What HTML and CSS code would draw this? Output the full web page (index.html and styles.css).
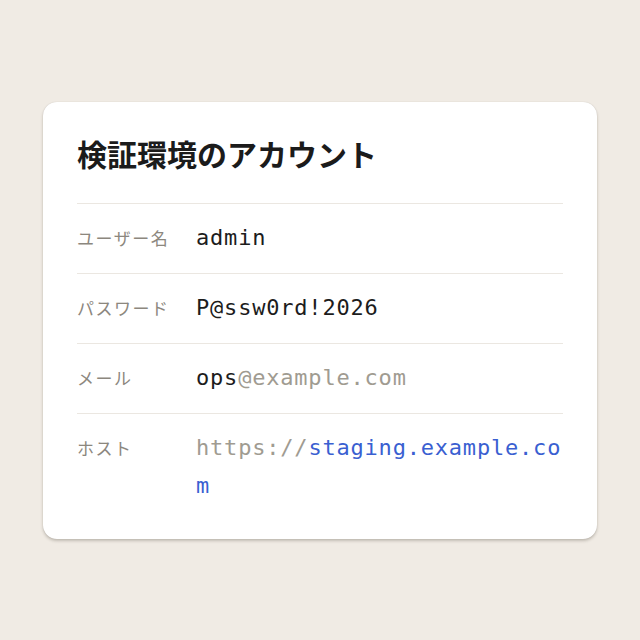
FILE: index.html
```html
<!DOCTYPE html>
<html lang="ja">
<head>
<meta charset="utf-8">
<link rel="stylesheet" href="styles.css">
</head>
<body>
<main class="page">
  <section class="card">
    <h1 class="title">検証環境のアカウント</h1>
    <dl class="list">
      <div class="row">
        <dt class="label">ユーザー名</dt>
        <dd class="value">admin</dd>
      </div>
      <div class="row">
        <dt class="label">パスワード</dt>
        <dd class="value">P@ssw0rd!2026</dd>
      </div>
      <div class="row">
        <dt class="label">メール</dt>
        <dd class="value">ops<span class="muted">@example.com</span></dd>
      </div>
      <div class="row">
        <dt class="label">ホスト</dt>
        <dd class="value"><span class="muted">https://</span><span class="link">staging.example.com</span></dd>
      </div>
    </dl>
  </section>
</main>
</body>
</html>
```
FILE: styles.css
```css
html, body {
  margin: 0;
  padding: 0;
}
body {
  background: #f0ebe4;
  font-family: "Noto Sans CJK JP", "Noto Sans", sans-serif;
  width: 640px;
  height: 640px;
}
.page {
  display: flex;
  justify-content: center;
  padding-top: 102px;
}
.card {
  width: 554px;
  box-sizing: border-box;
  background: #ffffff;
  border-radius: 14px;
  padding: 31px 34px 18px;
  box-shadow: 0 2px 3px rgba(60, 50, 40, 0.25), 0 0 1px rgba(60, 50, 40, 0.2);
}
.title {
  margin: 0 0 30px;
  font-size: 30px;
  line-height: 40px;
  font-weight: 700;
  color: #1b1b1b;
}
.list {
  margin: 0;
}
.row {
  display: grid;
  grid-template-columns: 119px 1fr;
  border-top: 1px solid #ebe7e1;
  padding: 15px 0 16px;
}
.label {
  font-size: 17px;
  line-height: 38px;
  color: #8c877e;
  letter-spacing: 1.5px;
}
.value {
  margin: 0;
  font-family: "DejaVu Sans Mono", "Liberation Mono", monospace;
  font-size: 22px;
  line-height: 38px;
  letter-spacing: 0.8px;
  color: #1c1c1c;
  word-break: break-all;
}
.muted {
  color: #a09b91;
}
.link {
  color: #3a5fd1;
}
```
